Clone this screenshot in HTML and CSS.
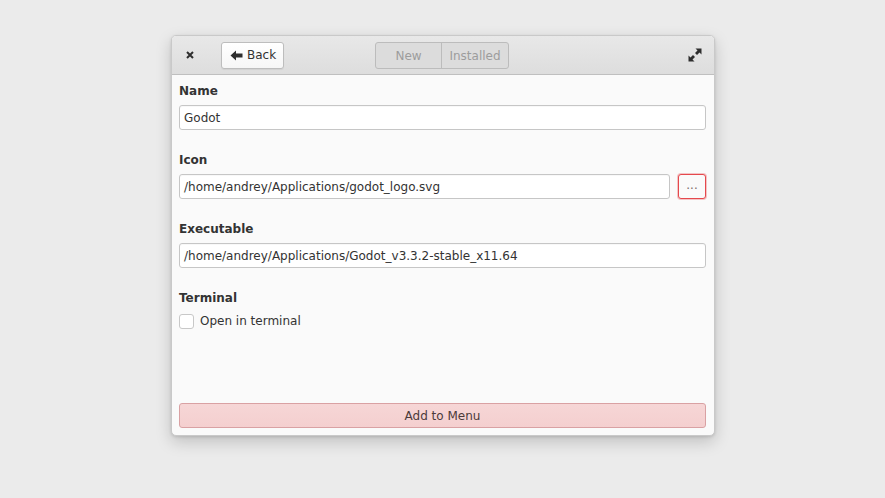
FILE: index.html
```html
<!DOCTYPE html>
<html>
<head>
<meta charset="utf-8">
<link rel="stylesheet" href="styles.css">
</head>
<body>
<div class="window">
  <div class="headerbar">
    <div class="hb-left">
      <button class="close-btn" aria-label="Close">
        <svg width="8" height="8" viewBox="0 0 8 8"><path d="M1 1L7 7M7 1L1 7" stroke="#2e2e2e" stroke-width="2" stroke-linecap="butt"/></svg>
      </button>
      <button class="back-btn">
        <svg width="13" height="11" viewBox="0 0 13 11"><path d="M0.5 5.5L6 0.5V3.5H12.5V7.5H6V10.5Z" fill="#2e2e2e"/></svg>
        <span>Back</span>
      </button>
    </div>
    <div class="segmented">
      <span class="seg">New</span><span class="seg">Installed</span>
    </div>
    <div class="hb-right">
      <svg width="14" height="14" viewBox="0 0 14 14"><path d="M13.5 0.5V6.5L11.5 4.5L9 7L7 5L9.5 2.5L7.5 0.5Z" fill="#2e2e2e"/><path d="M0.5 13.5V7.5L2.5 9.5L5 7L7 9L4.5 11.5L6.5 13.5Z" fill="#2e2e2e"/></svg>
    </div>
  </div>
  <div class="content">
    <div class="field">
      <div class="label">Name</div>
      <div class="entry">Godot</div>
    </div>
    <div class="field">
      <div class="label">Icon</div>
      <div class="row">
        <div class="entry grow">/home/andrey/Applications/godot_logo.svg</div>
        <button class="dots">...</button>
      </div>
    </div>
    <div class="field">
      <div class="label">Executable</div>
      <div class="entry">/home/andrey/Applications/Godot_v3.3.2-stable_x11.64</div>
    </div>
    <div class="field">
      <div class="label">Terminal</div>
      <label class="check"><span class="box"></span><span>Open in terminal</span></label>
    </div>
    <div class="spacer"></div>
    <button class="add-btn">Add to Menu</button>
  </div>
</div>
</body>
</html>
```
FILE: styles.css
```css
* { box-sizing: border-box; }
html, body { margin: 0; padding: 0; }
body {
  background: #ebebeb;
  font-family: "DejaVu Sans", "Noto Sans", sans-serif;
  font-size: 12px;
  color: #333333;
  width: 885px;
  height: 498px;
  overflow: hidden;
}
button { font-family: inherit; font-size: 12px; margin: 0; }
.window {
  width: 544px;
  height: 401px;
  margin: 35px 0 0 171px;
  background: #fafafa;
  border-radius: 5px;
  border: 1px solid #c9c9c9;
  box-shadow: 0 6px 16px rgba(0,0,0,0.18), 0 1px 3px rgba(0,0,0,0.12);
  display: flex;
  flex-direction: column;
  overflow: hidden;
}
.headerbar {
  height: 39px;
  flex: none;
  background: linear-gradient(#e8e8e8, #dddddd);
  border-bottom: 1px solid #bfbfbf;
  display: flex;
  align-items: center;
  padding: 0 12px 0 10px;
  position: relative;
}
.hb-left { display: flex; align-items: center; gap: 23px; flex: 1; }
.close-btn {
  border: none; background: none; padding: 0; width: 16px; height: 16px;
  display: flex; align-items: center; justify-content: center;
}
.back-btn {
  height: 27px;
  width: 63px;
  display: flex; align-items: center; gap: 4px;
  padding: 0 0 0 8px;
  background: linear-gradient(#ffffff, #f6f6f6);
  border: 1px solid #bdbdbd;
  border-radius: 3px;
  color: #333;
  box-shadow: 0 1px 1px rgba(0,0,0,0.06);
  font-size: 12px;
}
.segmented {
  position: absolute;
  left: 203px;
  top: 6px;
  display: flex;
  height: 27px;
  border: 1px solid #bcbcbc;
  border-radius: 3px;
  background: #dcdcdc;
  overflow: hidden;
}
.seg {
  display: flex; align-items: center; justify-content: center;
  color: #9c9c9c;
  font-size: 12px;
}
.seg:first-child { width: 66px; border-right: 1px solid #bcbcbc; }
.seg:last-child { width: 66px; }
.hb-right { display: flex; align-items: center; }
.content {
  flex: 1;
  display: flex;
  flex-direction: column;
  padding: 8px 8px 7px 7px;
}
.field { display: flex; flex-direction: column; gap: 6px; margin-bottom: 22px; }
.label { font-weight: bold; line-height: 16px; color: #333; }
.entry {
  height: 25px;
  border: 1px solid #c6c6c6;
  border-radius: 3px;
  background: #ffffff;
  padding: 0 4px;
  display: flex; align-items: center;
  color: #333;
  box-shadow: inset 0 1px 1px rgba(0,0,0,0.03);
}
.row { display: flex; gap: 8px; }
.grow { flex: 1; }
.dots {
  width: 28px; height: 25px;
  border: 1px solid #e5484d;
  border-radius: 3px;
  background: #fafafa;
  box-shadow: 0 0 0 1px rgba(229,72,77,0.3);
  color: #806a6a;
  padding: 0 0 3px 0;
  font-size: 12px;
}
.check { display: flex; align-items: center; gap: 6px; height: 16px; margin-top: 1px; }
.box {
  width: 15px; height: 15px;
  border: 1px solid #c8c8c8;
  border-radius: 3px;
  background: #ffffff;
}
.spacer { flex: 1; }
.add-btn {
  height: 25px;
  border: 1px solid #d9a1a3;
  border-radius: 3px;
  background: linear-gradient(#f6d6d6, #f4cfcf);
  color: #4b3b3b;
  width: 100%;
}
```
